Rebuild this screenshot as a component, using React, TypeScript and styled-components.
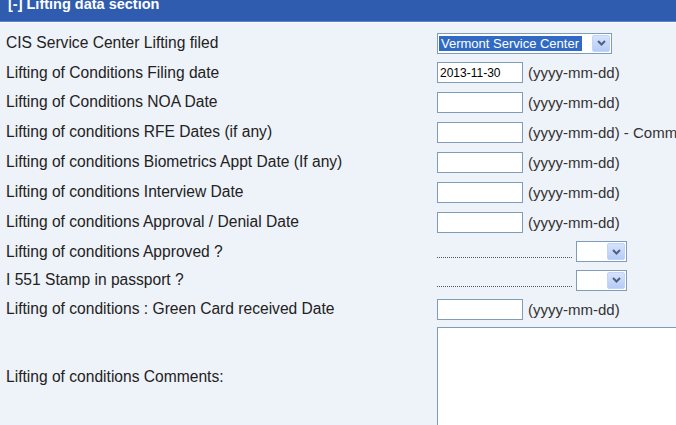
import styled, { createGlobalStyle } from "styled-components"

const GlobalStyle = createGlobalStyle`
  html, body {
    margin: 0;
    padding: 0;
    background-color: #eef2f9;
    overflow: hidden;
  }
  body {
    font-family: "Liberation Sans", Arial, sans-serif;
  }
`

const Section = styled.div`
  width: 676px;
  height: 425px;
  overflow: hidden;
  background-color: #eef2f9;
`

const SectionHeader = styled.div`
  height: 21px;
  background-color: #2f5cae;
  border-bottom: 1px solid #5b82c9;
  box-shadow: 0 1px 0 #f7f9fd;
  display: flex;
  align-items: flex-end;
  overflow: hidden;
  padding-left: 8px;

  span {
    color: #ffffff;
    font-weight: bold;
    font-size: 14.5px;
    line-height: 15px;
    padding-bottom: 9px;
  }
`

const Rows = styled.div`
  display: flex;
  flex-direction: column;
  padding-top: 6px;
`

const Row = styled.div<{ $h: number }>`
  display: grid;
  grid-template-columns: 431px 1fr;
  align-items: center;
  height: ${(p) => p.$h}px;
  padding-left: 6px;
`

const Label = styled.div`
  font-size: 15.6px;
  color: #222222;
  white-space: nowrap;
`

const Control = styled.div`
  display: flex;
  align-items: center;
  gap: 5px;
  white-space: nowrap;
`

const DateInput = styled.input`
  box-sizing: border-box;
  width: 86px;
  height: 21px;
  border: 1px solid #7f9db9;
  background: #ffffff;
  font-family: "Liberation Sans", Arial, sans-serif;
  font-size: 12px;
  padding: 0 2px;
  color: #000000;
  outline: none;
`

const Hint = styled.span`
  font-size: 15px;
  color: #333333;
`

const SelectBox = styled.div<{ $w: number }>`
  box-sizing: border-box;
  width: ${(p) => p.$w}px;
  height: 21px;
  border: 1px solid #7f9db9;
  background: #ffffff;
  display: flex;
  align-items: stretch;
  padding: 1px;
`

const SelectValue = styled.div`
  flex: 1;
  display: flex;
  align-items: center;
`

const Selected = styled.span`
  background: #316ac5;
  color: #ffffff;
  font-size: 13px;
  line-height: 15px;
  padding: 0 3px 0 2px;
  margin-right: 10px;
  flex: 1;
`

const DropButton = styled.div`
  width: 16px;
  background: linear-gradient(#d6e3fb, #b7cbf5);
  border: 1px solid #c3d3fd;
  border-radius: 2px;
  display: flex;
  align-items: center;
  justify-content: center;
`

const Dots = styled.div`
  width: 135px;
  border-bottom: 1px dotted #555555;
  margin-top: 12px;
  margin-right: -1px;
`

const CommentRow = styled.div`
  display: grid;
  grid-template-columns: 431px 1fr;
  align-items: center;
  padding-left: 6px;
  margin-top: 3px;
`

const Comments = styled.textarea`
  box-sizing: border-box;
  width: 260px;
  height: 100px;
  border: 1px solid #7f9db9;
  background: #ffffff;
  resize: none;
  outline: none;
`

const Chevron = () => (
  <svg width="9" height="6" viewBox="0 0 9 6">
    <path d="M1 1 L4.5 4.5 L8 1" stroke="#4d6185" strokeWidth="2" fill="none" />
  </svg>
)

const Dropdown = ({ w, value }: { w: number; value?: string }) => (
  <SelectBox $w={w}>
    <SelectValue>{value && <Selected>{value}</Selected>}</SelectValue>
    <DropButton>
      <Chevron />
    </DropButton>
  </SelectBox>
)

type Field = { label: string; h: number; kind: "select" | "date" | "yesno"; value?: string; extra?: string }

const fields: Field[] = [
  { label: "CIS Service Center Lifting filed", h: 30, kind: "select", value: "Vermont Service Center" },
  { label: "Lifting of Conditions Filing date", h: 29, kind: "date", value: "2013-11-30" },
  { label: "Lifting of Conditions NOA Date", h: 30, kind: "date" },
  { label: "Lifting of conditions RFE Dates (if any)", h: 30, kind: "date", extra: " - Comments" },
  { label: "Lifting of conditions Biometrics Appt Date (If any)", h: 30, kind: "date" },
  { label: "Lifting of conditions Interview Date", h: 30, kind: "date" },
  { label: "Lifting of conditions Approval / Denial Date", h: 30, kind: "date" },
  { label: "Lifting of conditions Approved ?", h: 29, kind: "yesno" },
  { label: "I 551 Stamp in passport ?", h: 28, kind: "yesno" },
  { label: "Lifting of conditions : Green Card received Date", h: 30, kind: "date" },
]

const App = () => {
  return (
    <>
      <GlobalStyle />
      <Section>
        <SectionHeader>
          <span>[-] Lifting data section</span>
        </SectionHeader>
        <Rows>
          {fields.map((f) => (
            <Row key={f.label} $h={f.h}>
              <Label>{f.label}</Label>
              <Control>
                {f.kind === "select" && <Dropdown w={175} value={f.value} />}
                {f.kind === "date" && (
                  <>
                    <DateInput type="text" defaultValue={f.value || ""} />
                    <Hint>(yyyy-mm-dd){f.extra}</Hint>
                  </>
                )}
                {f.kind === "yesno" && (
                  <>
                    <Dots />
                    <Dropdown w={51} />
                  </>
                )}
              </Control>
            </Row>
          ))}
          <CommentRow>
            <Label>Lifting of conditions Comments:</Label>
            <Comments />
          </CommentRow>
        </Rows>
      </Section>
    </>
  )
}

export default App
